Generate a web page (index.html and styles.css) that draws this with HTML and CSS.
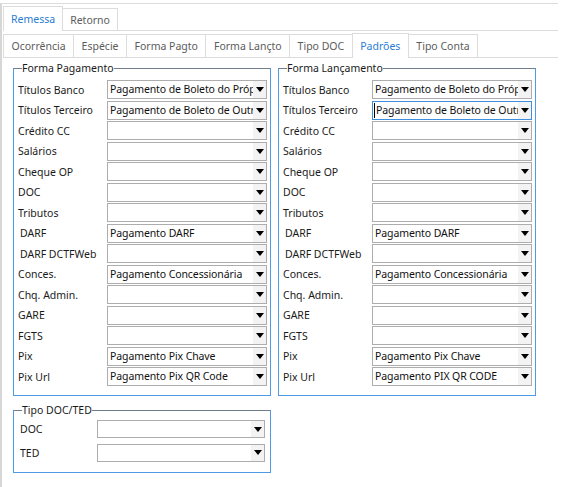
FILE: index.html
```html
<!DOCTYPE html>
<html lang="pt-BR">
<head>
  <meta charset="UTF-8">
  <title>Padrões</title>
  <link rel="stylesheet" href="styles.css">
</head>
<body>
  <div class="page">
    <div class="tabs outer-tabs">
      <div class="tab active">Remessa</div>
      <div class="tab">Retorno</div>
    </div>

    <div class="tabs inner-tabs">
      <div class="tab">Ocorrência</div>
      <div class="tab">Espécie</div>
      <div class="tab">Forma Pagto</div>
      <div class="tab">Forma Lançto</div>
      <div class="tab">Tipo DOC</div>
      <div class="tab active">Padrões</div>
      <div class="tab">Tipo Conta</div>
    </div>

    <div class="content">
      <div class="groups">
        <fieldset class="group">
          <legend>Forma Pagamento</legend>
          <div class="rows">
            <div class="row"><label>Títulos Banco</label><div class="combo"><span class="text">Pagamento de Boleto do Próprio Banco</span><span class="arrow"></span></div></div>
            <div class="row"><label>Títulos Terceiro</label><div class="combo"><span class="text">Pagamento de Boleto de Outros Bancos</span><span class="arrow"></span></div></div>
            <div class="row"><label>Crédito CC</label><div class="combo"><span class="text"></span><span class="arrow"></span></div></div>
            <div class="row"><label>Salários</label><div class="combo"><span class="text"></span><span class="arrow"></span></div></div>
            <div class="row"><label>Cheque OP</label><div class="combo"><span class="text"></span><span class="arrow"></span></div></div>
            <div class="row"><label>DOC</label><div class="combo"><span class="text"></span><span class="arrow"></span></div></div>
            <div class="row"><label>Tributos</label><div class="combo"><span class="text"></span><span class="arrow"></span></div></div>
            <div class="row"><label class="indent">DARF</label><div class="combo"><span class="text">Pagamento DARF</span><span class="arrow"></span></div></div>
            <div class="row"><label class="indent">DARF DCTFWeb</label><div class="combo"><span class="text"></span><span class="arrow"></span></div></div>
            <div class="row"><label>Conces.</label><div class="combo"><span class="text">Pagamento Concessionária</span><span class="arrow"></span></div></div>
            <div class="row"><label>Chq. Admin.</label><div class="combo"><span class="text"></span><span class="arrow"></span></div></div>
            <div class="row"><label>GARE</label><div class="combo"><span class="text"></span><span class="arrow"></span></div></div>
            <div class="row"><label>FGTS</label><div class="combo"><span class="text"></span><span class="arrow"></span></div></div>
            <div class="row"><label>Pix</label><div class="combo"><span class="text">Pagamento Pix Chave</span><span class="arrow"></span></div></div>
            <div class="row"><label>Pix Url</label><div class="combo"><span class="text">Pagamento Pix QR Code</span><span class="arrow"></span></div></div>
          </div>
        </fieldset>

        <fieldset class="group">
          <legend>Forma Lançamento</legend>
          <div class="rows">
            <div class="row"><label>Títulos Banco</label><div class="combo"><span class="text">Pagamento de Boleto do Próprio Banco</span><span class="arrow"></span></div></div>
            <div class="row"><label>Títulos Terceiro</label><div class="combo focus"><span class="text">Pagamento de Boleto de Outros Bancos</span><span class="arrow"></span></div></div>
            <div class="row"><label>Crédito CC</label><div class="combo"><span class="text"></span><span class="arrow"></span></div></div>
            <div class="row"><label>Salários</label><div class="combo"><span class="text"></span><span class="arrow"></span></div></div>
            <div class="row"><label>Cheque OP</label><div class="combo"><span class="text"></span><span class="arrow"></span></div></div>
            <div class="row"><label>DOC</label><div class="combo"><span class="text"></span><span class="arrow"></span></div></div>
            <div class="row"><label>Tributos</label><div class="combo"><span class="text"></span><span class="arrow"></span></div></div>
            <div class="row"><label class="indent">DARF</label><div class="combo"><span class="text">Pagamento DARF</span><span class="arrow"></span></div></div>
            <div class="row"><label class="indent">DARF DCTFWeb</label><div class="combo"><span class="text"></span><span class="arrow"></span></div></div>
            <div class="row"><label>Conces.</label><div class="combo"><span class="text">Pagamento Concessionária</span><span class="arrow"></span></div></div>
            <div class="row"><label>Chq. Admin.</label><div class="combo"><span class="text"></span><span class="arrow"></span></div></div>
            <div class="row"><label>GARE</label><div class="combo"><span class="text"></span><span class="arrow"></span></div></div>
            <div class="row"><label>FGTS</label><div class="combo"><span class="text"></span><span class="arrow"></span></div></div>
            <div class="row"><label>Pix</label><div class="combo"><span class="text">Pagamento Pix Chave</span><span class="arrow"></span></div></div>
            <div class="row"><label>Pix Url</label><div class="combo"><span class="text">Pagamento PIX QR CODE</span><span class="arrow"></span></div></div>
          </div>
        </fieldset>
      </div>

      <fieldset class="group small">
        <legend>Tipo DOC/TED</legend>
        <div class="rows">
          <div class="row"><label class="indent">DOC</label><div class="combo"><span class="text"></span><span class="arrow"></span></div></div>
          <div class="row"><label class="indent">TED</label><div class="combo"><span class="text"></span><span class="arrow"></span></div></div>
        </div>
      </fieldset>
    </div>
  </div>
</body>
</html>
```

FILE: styles.css
```css
body {
  margin: 0;
  background-color: white;
  font-family: "Noto Sans", "Open Sans", sans-serif;
  font-size: 10.5px;
  color: #1a1a1a;
}

.page {
  width: 558px;
  height: 484px;
  margin-top: 3px;
  padding: 2px 0 0 1px;
  border-top: 1px solid #dcdcdc;
  border-left: 2px solid #d6d6d6;
  box-sizing: border-box;
}

/* tab strips */
.tabs {
  display: flex;
  align-items: flex-end;
  border-bottom: 1px solid #dcdcdc;
}

.tab {
  height: 22px;
  line-height: 22px;
  padding: 0 7px;
  border: 1px solid #dcdcdc;
  border-bottom: none;
  margin-left: -1px;
  color: #5c5c5c;
  background-color: white;
  box-sizing: border-box;
}

.tab:first-child {
  margin-left: 0;
}

.tab.active {
  height: 25px;
  line-height: 24px;
  margin-bottom: -1px;
  color: #2b7cd3;
  position: relative;
}

.inner-tabs {
  margin-top: 2px;
}

.inner-tabs .tab {
  height: 23px;
  line-height: 23px;
  padding: 0 7.5px;
}

.inner-tabs .tab.active {
  height: 25px;
  line-height: 24px;
}

/* group boxes */
.content {
  padding: 3px 0 0 10px;
}

.groups {
  display: flex;
  gap: 7px;
}

.group {
  margin: 0;
  padding: 5px 3px 9px 4px;
  border: 1px solid #4d9be6;
  border-top-color: #6f7d8c;
  min-width: 0;
}

.group legend {
  padding: 0;
  margin-left: 4px;
  line-height: 14px;
  color: #1a1a1a;
}

.rows {
  display: flex;
  flex-direction: column;
  gap: 1.5px;
}

.row {
  display: flex;
  align-items: center;
}

.row label {
  width: 89px;
  flex: none;
}

.row label.indent {
  padding-left: 2px;
  width: 87px;
}

/* combo boxes */
.combo {
  width: 160px;
  height: 19px;
  display: flex;
  align-items: stretch;
  border: 1px solid #adadad;
  box-sizing: border-box;
  background-color: white;
}

.combo.focus {
  border-color: #3e8fe0;
}

.combo .text {
  flex: 1;
  overflow: hidden;
  white-space: nowrap;
  line-height: 17px;
  padding-left: 2px;
  color: #111;
  letter-spacing: -0.1px;
}

.combo.focus .text {
  padding-left: 1px;
  border-left: 1px solid #000;
  margin: 1px 0 1px 1px;
  line-height: 15px;
}

.arrow {
  width: 13px;
  flex: none;
  background-color: #f3f3f3;
  display: flex;
  align-items: center;
  justify-content: center;
}

.arrow::after {
  content: "";
  border-left: 4.5px solid transparent;
  border-right: 4.5px solid transparent;
  border-top: 5px solid #000;
}

/* Tipo DOC/TED */
.group.small {
  width: 258px;
  box-sizing: border-box;
  margin-top: 7px;
  padding: 3px 3px 10px 4px;
}

.group.small .rows {
  gap: 5.5px;
}

.group.small .row label {
  width: 79px;
}

.group.small .row label.indent {
  width: 77px;
}

.group.small .combo {
  width: 168px;
  height: 18px;
}

.group.small .combo .text {
  line-height: 16px;
}
```
